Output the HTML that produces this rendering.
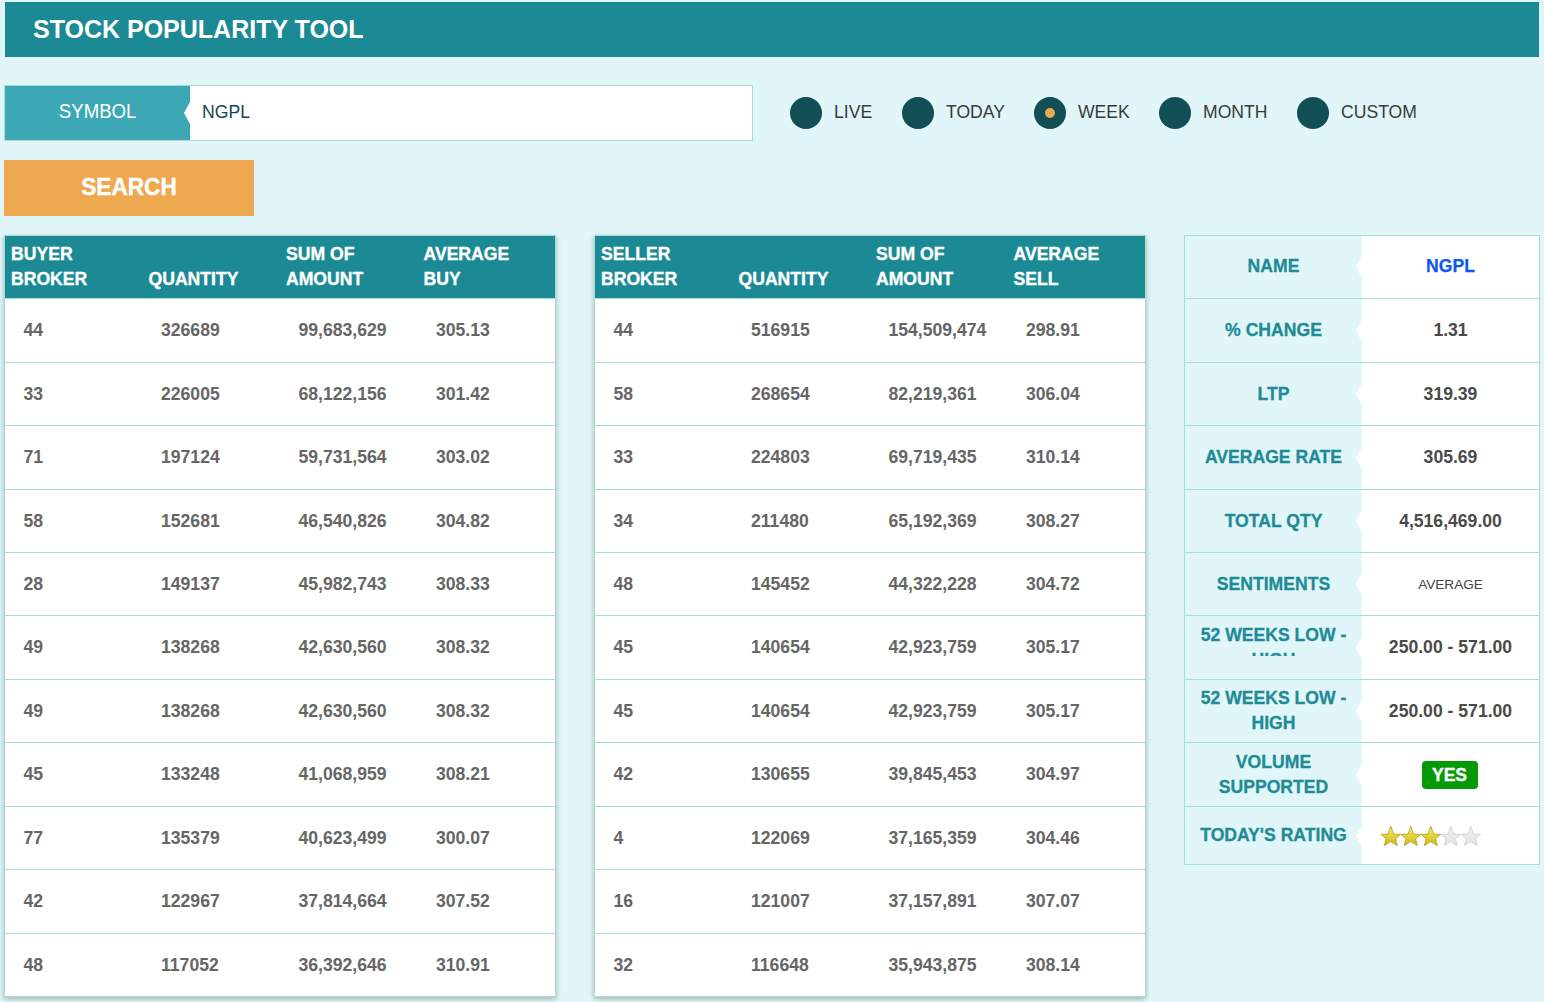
<!DOCTYPE html>
<html><head><meta charset="utf-8"><title>Stock Popularity Tool</title>
<style>
*{margin:0;padding:0;box-sizing:border-box}
html,body{width:1544px;height:1002px;overflow:hidden;background:#e0f6f9;font-family:"Liberation Sans",sans-serif;position:relative}
.hdr{position:absolute;left:5px;top:2px;width:1534px;height:55px;background:#1c8a95}
.hdr h1{position:absolute;left:28px;top:13px;font-size:25px;line-height:29px;font-weight:bold;color:#fff;letter-spacing:0}
.sym{position:absolute;left:4px;top:85px;width:749px;height:56px;border:1px solid #a9dcd5;background:#fff}
.symlab{position:absolute;left:0;top:0;width:185px;height:54px;background:#3da8b5;color:#fff;font-size:19px;line-height:52px;text-align:center}
.symlab span{display:inline-block;transform:scale(0.98,1.1);transform-origin:50% 60%}
.symnotch{position:absolute;left:179px;top:16px;width:0;height:0;border-right:6px solid #fff;border-top:11px solid transparent;border-bottom:11px solid transparent}
.symval{position:absolute;left:197px;top:-1px;line-height:54px;font-size:17.6px;color:#0f4853;transform:scale(1,1.08);transform-origin:50% 50%}
.radio{position:absolute;top:97px;width:32px;height:32px;border-radius:50%;background:#114e55}
.radio.on::after{content:"";position:absolute;left:11px;top:11px;width:10px;height:10px;border-radius:50%;background:#eeaa50}
.rl{position:absolute;top:102px;font-size:17.6px;line-height:21px;color:#3a3a3a;transform:scale(1,1.07);transform-origin:50% 75%}
.search span{display:inline-block;transform:translateY(0.5px) scale(1,1.06);transform-origin:50% 50%}
.search{position:absolute;left:4px;top:160px;width:250px;height:56px;background:#eea84f;color:#fff;font-weight:bold;font-size:22.6px;line-height:54px;text-align:center;-webkit-text-stroke:0.4px #fff}
.tbl{position:absolute;top:235px;width:552px;height:762px;background:#fff;border:1px solid #a9ddcf;box-shadow:0 2px 5px rgba(0,0,0,.28)}
.thead{position:absolute;left:0;top:0;width:550px;height:62px;background:#1c8a95}
.th{position:absolute;top:6px;width:137.5px;padding-left:6px;font-size:17.6px;line-height:25px;font-weight:bold;color:#fff;height:50px;display:flex;align-items:flex-end;-webkit-text-stroke:0.35px #fff}
.tr{position:absolute;left:0;width:550px;border-top:1px solid #a9ddcf}
.td{position:absolute;top:0;font-size:17.6px;font-weight:bold;color:#666}
.panel{position:absolute;left:1184px;top:235px;width:356px;height:630px;border:1px solid #a9ddcf;background:#fff}
.prow{position:absolute;left:0;width:354px;border-top:1px solid #a9ddcf}
.prow.first{border-top:0}
.prow.first .lt,.prow.first .v{position:relative;top:-1px}
.pl{position:absolute;left:0;top:0;width:177px;height:100%;background:#e0f6f9;display:flex;align-items:center;justify-content:center;text-align:center}
.lt{font-size:17.6px;line-height:25px;font-weight:bold;color:#1f8b96;-webkit-text-stroke:0.3px #1f8b96}
.pv{position:absolute;left:177px;top:0;width:177px;height:100%;display:flex;align-items:center;justify-content:center}
.v{font-size:17.6px;font-weight:bold;color:#4a4a4a}
.v.blue{color:#0d58ee;-webkit-text-stroke:0.25px #0d58ee}
.v.small{font-size:13.6px;font-weight:normal;color:#444}
.notch{position:absolute;left:171px;top:50%;margin-top:-11px;width:0;height:0;border-right:6px solid #fff;border-top:11px solid transparent;border-bottom:11px solid transparent}
.badge{display:inline-block;position:relative;left:-1px;width:56px;height:28px;margin-top:0px;border-radius:4px;background:#049a06;-webkit-text-stroke:0.3px #fff;color:#fff;font-weight:bold;font-size:17.6px;line-height:28px;text-align:center}
.star{position:absolute;top:0}
.pv .star{top:19px}
.clip{position:absolute;left:0;top:0;width:177px;height:40px;overflow:hidden;text-align:center}
.cliptxt{position:absolute;left:0;top:7px;width:177px;font-size:17.6px;line-height:25px;font-weight:bold;color:#1f8b96;-webkit-text-stroke:0.3px #1f8b96}
</style></head>
<body>
<svg width="0" height="0" style="position:absolute"><defs>
<linearGradient id="gold" x1="0" y1="0" x2="0" y2="1"><stop offset="0" stop-color="#f3ea8a"/><stop offset="0.5" stop-color="#e6d43c"/><stop offset="1" stop-color="#cdb422"/></linearGradient>
<linearGradient id="grey" x1="0" y1="0" x2="0" y2="1"><stop offset="0" stop-color="#f2f2f2"/><stop offset="1" stop-color="#e2e2e2"/></linearGradient>
</defs></svg>
<div class="hdr"><h1>STOCK POPULARITY TOOL</h1></div>
<div class="sym"><div class="symlab"><span>SYMBOL</span></div><div class="symnotch"></div><div class="symval">NGPL</div></div>
<div class="radio" style="left:790px"></div><div class="rl" style="left:834px">LIVE</div>
<div class="radio" style="left:902px"></div><div class="rl" style="left:946px">TODAY</div>
<div class="radio on" style="left:1034px"></div><div class="rl" style="left:1078px">WEEK</div>
<div class="radio" style="left:1159px"></div><div class="rl" style="left:1203px">MONTH</div>
<div class="radio" style="left:1297px"></div><div class="rl" style="left:1341px">CUSTOM</div>
<div class="search"><span>SEARCH</span></div>
<div class="tbl" style="left:4px">
<div class="thead">
<div class="th" style="left:0.0px">BUYER<br>BROKER</div>
<div class="th" style="left:137.5px">QUANTITY</div>
<div class="th" style="left:275.0px">SUM OF<br>AMOUNT</div>
<div class="th" style="left:412.5px">AVERAGE<br>BUY</div>
</div>
<div class="tr" style="top:62px;height:64px;line-height:63px">
<span class="td" style="left:18.5px">44</span>
<span class="td" style="left:156.0px">326689</span>
<span class="td" style="left:293.5px">99,683,629</span>
<span class="td" style="left:431.0px">305.13</span>
</div>
<div class="tr" style="top:126px;height:63px;line-height:62px">
<span class="td" style="left:18.5px">33</span>
<span class="td" style="left:156.0px">226005</span>
<span class="td" style="left:293.5px">68,122,156</span>
<span class="td" style="left:431.0px">301.42</span>
</div>
<div class="tr" style="top:189px;height:64px;line-height:63px">
<span class="td" style="left:18.5px">71</span>
<span class="td" style="left:156.0px">197124</span>
<span class="td" style="left:293.5px">59,731,564</span>
<span class="td" style="left:431.0px">303.02</span>
</div>
<div class="tr" style="top:253px;height:63px;line-height:62px">
<span class="td" style="left:18.5px">58</span>
<span class="td" style="left:156.0px">152681</span>
<span class="td" style="left:293.5px">46,540,826</span>
<span class="td" style="left:431.0px">304.82</span>
</div>
<div class="tr" style="top:316px;height:63px;line-height:62px">
<span class="td" style="left:18.5px">28</span>
<span class="td" style="left:156.0px">149137</span>
<span class="td" style="left:293.5px">45,982,743</span>
<span class="td" style="left:431.0px">308.33</span>
</div>
<div class="tr" style="top:379px;height:64px;line-height:63px">
<span class="td" style="left:18.5px">49</span>
<span class="td" style="left:156.0px">138268</span>
<span class="td" style="left:293.5px">42,630,560</span>
<span class="td" style="left:431.0px">308.32</span>
</div>
<div class="tr" style="top:443px;height:63px;line-height:62px">
<span class="td" style="left:18.5px">49</span>
<span class="td" style="left:156.0px">138268</span>
<span class="td" style="left:293.5px">42,630,560</span>
<span class="td" style="left:431.0px">308.32</span>
</div>
<div class="tr" style="top:506px;height:64px;line-height:63px">
<span class="td" style="left:18.5px">45</span>
<span class="td" style="left:156.0px">133248</span>
<span class="td" style="left:293.5px">41,068,959</span>
<span class="td" style="left:431.0px">308.21</span>
</div>
<div class="tr" style="top:570px;height:63px;line-height:62px">
<span class="td" style="left:18.5px">77</span>
<span class="td" style="left:156.0px">135379</span>
<span class="td" style="left:293.5px">40,623,499</span>
<span class="td" style="left:431.0px">300.07</span>
</div>
<div class="tr" style="top:633px;height:64px;line-height:63px">
<span class="td" style="left:18.5px">42</span>
<span class="td" style="left:156.0px">122967</span>
<span class="td" style="left:293.5px">37,814,664</span>
<span class="td" style="left:431.0px">307.52</span>
</div>
<div class="tr" style="top:697px;height:63px;line-height:62px">
<span class="td" style="left:18.5px">48</span>
<span class="td" style="left:156.0px">117052</span>
<span class="td" style="left:293.5px">36,392,646</span>
<span class="td" style="left:431.0px">310.91</span>
</div>
</div>
<div class="tbl" style="left:594px">
<div class="thead">
<div class="th" style="left:0.0px">SELLER<br>BROKER</div>
<div class="th" style="left:137.5px">QUANTITY</div>
<div class="th" style="left:275.0px">SUM OF<br>AMOUNT</div>
<div class="th" style="left:412.5px">AVERAGE<br>SELL</div>
</div>
<div class="tr" style="top:62px;height:64px;line-height:63px">
<span class="td" style="left:18.5px">44</span>
<span class="td" style="left:156.0px">516915</span>
<span class="td" style="left:293.5px">154,509,474</span>
<span class="td" style="left:431.0px">298.91</span>
</div>
<div class="tr" style="top:126px;height:63px;line-height:62px">
<span class="td" style="left:18.5px">58</span>
<span class="td" style="left:156.0px">268654</span>
<span class="td" style="left:293.5px">82,219,361</span>
<span class="td" style="left:431.0px">306.04</span>
</div>
<div class="tr" style="top:189px;height:64px;line-height:63px">
<span class="td" style="left:18.5px">33</span>
<span class="td" style="left:156.0px">224803</span>
<span class="td" style="left:293.5px">69,719,435</span>
<span class="td" style="left:431.0px">310.14</span>
</div>
<div class="tr" style="top:253px;height:63px;line-height:62px">
<span class="td" style="left:18.5px">34</span>
<span class="td" style="left:156.0px">211480</span>
<span class="td" style="left:293.5px">65,192,369</span>
<span class="td" style="left:431.0px">308.27</span>
</div>
<div class="tr" style="top:316px;height:63px;line-height:62px">
<span class="td" style="left:18.5px">48</span>
<span class="td" style="left:156.0px">145452</span>
<span class="td" style="left:293.5px">44,322,228</span>
<span class="td" style="left:431.0px">304.72</span>
</div>
<div class="tr" style="top:379px;height:64px;line-height:63px">
<span class="td" style="left:18.5px">45</span>
<span class="td" style="left:156.0px">140654</span>
<span class="td" style="left:293.5px">42,923,759</span>
<span class="td" style="left:431.0px">305.17</span>
</div>
<div class="tr" style="top:443px;height:63px;line-height:62px">
<span class="td" style="left:18.5px">45</span>
<span class="td" style="left:156.0px">140654</span>
<span class="td" style="left:293.5px">42,923,759</span>
<span class="td" style="left:431.0px">305.17</span>
</div>
<div class="tr" style="top:506px;height:64px;line-height:63px">
<span class="td" style="left:18.5px">42</span>
<span class="td" style="left:156.0px">130655</span>
<span class="td" style="left:293.5px">39,845,453</span>
<span class="td" style="left:431.0px">304.97</span>
</div>
<div class="tr" style="top:570px;height:63px;line-height:62px">
<span class="td" style="left:18.5px">4</span>
<span class="td" style="left:156.0px">122069</span>
<span class="td" style="left:293.5px">37,165,359</span>
<span class="td" style="left:431.0px">304.46</span>
</div>
<div class="tr" style="top:633px;height:64px;line-height:63px">
<span class="td" style="left:18.5px">16</span>
<span class="td" style="left:156.0px">121007</span>
<span class="td" style="left:293.5px">37,157,891</span>
<span class="td" style="left:431.0px">307.07</span>
</div>
<div class="tr" style="top:697px;height:63px;line-height:62px">
<span class="td" style="left:18.5px">32</span>
<span class="td" style="left:156.0px">116648</span>
<span class="td" style="left:293.5px">35,943,875</span>
<span class="td" style="left:431.0px">308.14</span>
</div>
</div>
<div class="panel">
<div class="prow first" style="top:0px;height:62px">
<div class="pl"><div class="lt">NAME</div></div>
<div class="notch"></div>
<div class="pv"><span class="v blue">NGPL</span></div>
</div>
<div class="prow" style="top:62px;height:64px">
<div class="pl"><div class="lt">% CHANGE</div></div>
<div class="notch"></div>
<div class="pv"><span class="v">1.31</span></div>
</div>
<div class="prow" style="top:126px;height:63px">
<div class="pl"><div class="lt">LTP</div></div>
<div class="notch"></div>
<div class="pv"><span class="v">319.39</span></div>
</div>
<div class="prow" style="top:189px;height:64px">
<div class="pl"><div class="lt">AVERAGE RATE</div></div>
<div class="notch"></div>
<div class="pv"><span class="v">305.69</span></div>
</div>
<div class="prow" style="top:253px;height:63px">
<div class="pl"><div class="lt">TOTAL QTY</div></div>
<div class="notch"></div>
<div class="pv"><span class="v">4,516,469.00</span></div>
</div>
<div class="prow" style="top:316px;height:63px">
<div class="pl"><div class="lt">SENTIMENTS</div></div>
<div class="notch"></div>
<div class="pv"><span class="v small">AVERAGE</span></div>
</div>
<div class="prow" style="top:379px;height:64px">
<div class="pl"><div class="clip"><div class="cliptxt">52 WEEKS LOW -<br>HIGH</div></div></div>
<div class="notch"></div>
<div class="pv"><span class="v">250.00 - 571.00</span></div>
</div>
<div class="prow" style="top:443px;height:63px">
<div class="pl"><div class="lt">52 WEEKS LOW -<br>HIGH</div></div>
<div class="notch"></div>
<div class="pv"><span class="v">250.00 - 571.00</span></div>
</div>
<div class="prow" style="top:506px;height:64px">
<div class="pl"><div class="lt">VOLUME<br>SUPPORTED</div></div>
<div class="notch"></div>
<div class="pv"><span class="badge">YES</span></div>
</div>
<div class="prow" style="top:570px;height:58px">
<div class="pl"><div class="lt">TODAY'S RATING</div></div>
<div class="notch"></div>
<div class="pv"><svg class="star" style="left:19px" width="20" height="20" viewBox="0 0 20 20"><path d="M9.8 0.3 L12.6 8.1 L19.6 8.4 L14.5 12.8 L16.3 19.6 L9.8 15.6 L3.3 19.6 L5.1 12.8 L0.1 8.4 L7.0 8.1 Z" fill="url(#gold)" stroke="#b59a12" stroke-width="0.8" stroke-linejoin="round"/></svg><svg class="star" style="left:39px" width="20" height="20" viewBox="0 0 20 20"><path d="M9.8 0.3 L12.6 8.1 L19.6 8.4 L14.5 12.8 L16.3 19.6 L9.8 15.6 L3.3 19.6 L5.1 12.8 L0.1 8.4 L7.0 8.1 Z" fill="url(#gold)" stroke="#b59a12" stroke-width="0.8" stroke-linejoin="round"/></svg><svg class="star" style="left:59px" width="20" height="20" viewBox="0 0 20 20"><path d="M9.8 0.3 L12.6 8.1 L19.6 8.4 L14.5 12.8 L16.3 19.6 L9.8 15.6 L3.3 19.6 L5.1 12.8 L0.1 8.4 L7.0 8.1 Z" fill="url(#gold)" stroke="#b59a12" stroke-width="0.8" stroke-linejoin="round"/></svg><svg class="star" style="left:79px" width="20" height="20" viewBox="0 0 20 20"><path d="M9.8 0.3 L12.6 8.1 L19.6 8.4 L14.5 12.8 L16.3 19.6 L9.8 15.6 L3.3 19.6 L5.1 12.8 L0.1 8.4 L7.0 8.1 Z" fill="url(#grey)" stroke="#cfcfcf" stroke-width="0.8" stroke-linejoin="round"/></svg><svg class="star" style="left:99px" width="20" height="20" viewBox="0 0 20 20"><path d="M9.8 0.3 L12.6 8.1 L19.6 8.4 L14.5 12.8 L16.3 19.6 L9.8 15.6 L3.3 19.6 L5.1 12.8 L0.1 8.4 L7.0 8.1 Z" fill="url(#grey)" stroke="#cfcfcf" stroke-width="0.8" stroke-linejoin="round"/></svg></div>
</div>
</div>
</body></html>
